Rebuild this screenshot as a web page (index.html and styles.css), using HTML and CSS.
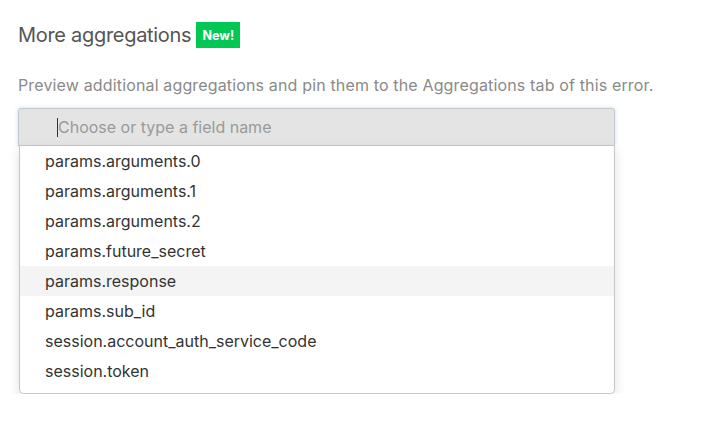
FILE: index.html
```html
<!DOCTYPE html>
<html>
<head>
<meta charset="utf-8">
<link rel="stylesheet" href="styles.css">
</head>
<body>
<div class="panel">
  <div class="title-row">
    <h2 class="title">More aggregations</h2>
    <span class="badge">New!</span>
  </div>
  <p class="desc">Preview additional aggregations and pin them to the Aggregations tab of this error.</p>
  <div class="select">
    <div class="input"><span class="caret"></span><span class="placeholder">Choose or type a field name</span></div>
    <ul class="menu">
      <li class="item">params.arguments.0</li>
      <li class="item">params.arguments.1</li>
      <li class="item">params.arguments.2</li>
      <li class="item">params.future_secret</li>
      <li class="item active">params.response</li>
      <li class="item">params.sub_id</li>
      <li class="item">session.account_auth_service_code</li>
      <li class="item">session.token</li>
    </ul>
  </div>
</div>
</body>
</html>
```
FILE: styles.css
```css
html, body {
  margin: 0;
  padding: 0;
  background: #fff;
}
body {
  font-family: Inter, "Liberation Sans", sans-serif;
  color: #333;
}
.panel {
  padding: 22px 0 0 18px;
  width: 597px;
}
.title-row {
  display: flex;
  align-items: center;
  gap: 5px;
  height: 26px;
}
.title {
  margin: 0;
  font-size: 20px;
  font-weight: 400;
  color: #555;
  letter-spacing: -0.3px;
}
.badge {
  background: #00c853;
  color: #fff;
  font-size: 12.5px;
  font-weight: 700;
  height: 26px;
  width: 44px;
  display: flex;
  align-items: center;
  justify-content: center;
}
.desc {
  margin: 0;
  padding-top: 27px;
  height: 33px;
  font-size: 16px;
  letter-spacing: 0.15px;
  color: #8a8a8a;
  line-height: 20px;
  white-space: nowrap;
}
.select {
  width: 597px;
}
.input {
  box-sizing: border-box;
  height: 38px;
  border: 1px solid #c8c8c8;
  background: #e4e4e4;
  border-radius: 3px 3px 0 0;
  box-shadow: 0 0 4px rgba(80, 160, 240, 0.35);
  display: flex;
  align-items: center;
  padding-left: 38px;
}
.caret {
  width: 1px;
  height: 19px;
  background: #333;
}
.placeholder {
  font-size: 16px;
  color: #9a9a9a;
}
.menu {
  list-style: none;
  margin: 0 0 0 1px;
  padding: 0 0 7px 0;
  background: #fff;
  border: 1px solid #c6c6c6;
  border-top: none;
  border-radius: 0 0 5px 5px;
  box-shadow: 0 4px 12px rgba(0, 0, 0, 0.12);
}
.item {
  height: 30px;
  line-height: 30px;
  padding-left: 25px;
  font-size: 16px;
  color: #333;
}
.item.active {
  background: #f4f4f4;
}
```
